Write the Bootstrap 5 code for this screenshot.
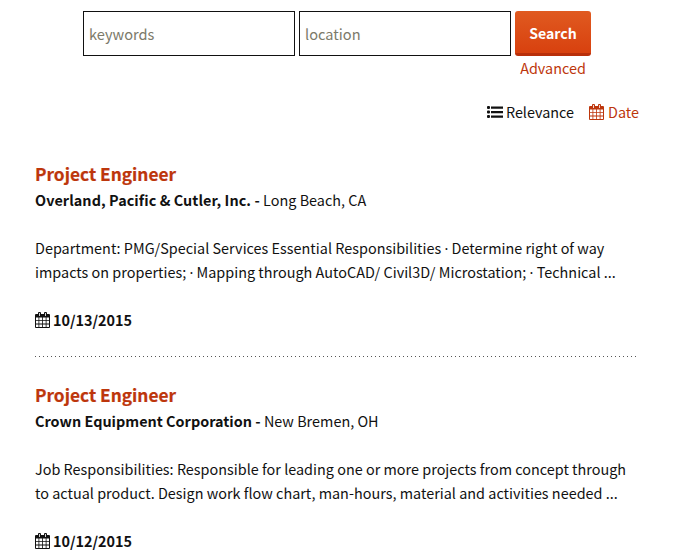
<!DOCTYPE html>
<html lang="en">
<head>
<meta charset="utf-8">
<meta name="viewport" content="width=device-width, initial-scale=1">
<title>Job search</title>
<link href="https://cdn.jsdelivr.net/npm/bootstrap@5.3.0/dist/css/bootstrap.min.css" rel="stylesheet">
<style>
body{font-family:"Noto Sans CJK SC","Noto Sans",sans-serif;font-size:14.4px;line-height:24px;color:#111;background:#fff;height:557px;overflow:hidden}
a{color:#bd360c;text-decoration:none}
.search-bar{padding:11px 0 0 83px;gap:4px}
.search-bar .form-control{width:212px;height:45px;border:1px solid #111;border-radius:0;padding:0 5px;font-size:14.6px;color:#111;box-shadow:none}
.search-bar .form-control::placeholder{color:#7c7a6a;opacity:1}
.btn-search{width:76px;height:45px;padding:3px 0 0;border:0;border-bottom:3px solid #b92f0a;border-radius:3px;background:linear-gradient(#e05a20,#d8410f);color:#fff;font-size:14.1px;font-weight:700}
.search-col{width:76px}
.advanced{line-height:24px}
.sort-bar{padding:20px 37px 0 0;gap:15px}
.sort-bar .d-flex,.posted{gap:3px}
.sort-bar .by-date{gap:4px}
.results{height:433px;overflow:hidden;padding:37px 40px 0 35px}
.job{height:196px;margin-bottom:25px;background:repeating-linear-gradient(90deg,#555 0 1px,transparent 1px 4px) left bottom/100% 1px no-repeat}
.job h2{font-size:17.3px;line-height:26px;font-weight:700;margin:0 0 1px;-webkit-text-stroke:.2px #bd360c}
.job p{margin:0 0 24px;white-space:nowrap;letter-spacing:.015px}
.job .company-wide{letter-spacing:.07px}
.dot{font-family:"Noto Sans",sans-serif;line-height:1}
.ico{width:15px;height:16px;flex:none}
.ico-list{width:16px;height:12px;flex:none}
</style>
<script src="https://cdn.jsdelivr.net/npm/bootstrap@5.3.0/dist/js/bootstrap.bundle.min.js"></script>
</head>
<body>
<svg class="d-none"><symbol id="cal" viewBox="0 0 15 16"><path fill="currentColor" fill-rule="evenodd" d="M1 2h2V1q0-1 1-1h1q1 0 1 1v1h3V1q0-1 1-1h1q1 0 1 1v1h2q1 0 1 1v12q0 1-1 1H1q-1 0-1-1V3q0-1 1-1zM1 5.5V8h2.5V5.5zm3.3 0V8h2.8V5.5zm3.6 0V8h2.8V5.5zm3.6 0V8H14V5.5zM1 8.8v2.8h2.5V8.8zm3.3 0v2.8h2.8V8.8zm3.6 0v2.8h2.8V8.8zm3.6 0v2.8H14V8.8zM1 12.4V15h2.5v-2.6zm3.3 0V15h2.8v-2.6zm3.6 0V15h2.8v-2.6zm3.6 0V15H14v-2.6zM4.1 1v3h.8V1zm6 0v3h.8V1z"/></symbol></svg>
<form class="search-bar d-flex align-items-start">
<input class="form-control" placeholder="keywords" aria-label="keywords">
<input class="form-control" placeholder="location" aria-label="location">
<div class="search-col text-center d-flex flex-column"><button type="button" class="btn btn-search">Search</button><a href="#" class="advanced">Advanced</a></div>
</form>
<div class="sort-bar d-flex justify-content-end">
<span class="d-flex align-items-center"><svg class="ico-list" viewBox="0 0 16 12" fill="currentColor"><path d="M1 0h1q1 0 1 1v1q0 1-1 1H1Q0 3 0 2V1q0-1 1-1zM1 4.5h1q1 0 1 1v1q0 1-1 1H1q-1 0-1-1v-1q0-1 1-1zM1 9h1q1 0 1 1v1q0 1-1 1H1q-1 0-1-1v-1q0-1 1-1zM4 .5h12v2.2H4zM4 5h12v2.2H4zM4 9.5h12v2.2H4z"/></svg><span>Relevance</span></span>
<a href="#" class="by-date d-flex align-items-center"><svg class="ico"><use href="#cal"/></svg><span>Date</span></a>
</div>
<main class="results">
<article class="job"><h2><a href="#">Project Engineer</a></h2>
<p><strong class="company-wide">Overland, Pacific &amp; Cutler, Inc. -</strong> Long Beach, CA</p>
<p>Department: PMG/Special Services Essential Responsibilities <span class="dot">·</span> Determine right of way<br>impacts on properties; <span class="dot">·</span> Mapping through AutoCAD/ Civil3D/ Microstation; <span class="dot">·</span> Technical ...</p>
<div class="posted d-flex align-items-center fw-bold"><svg class="ico"><use href="#cal"/></svg><span>10/13/2015</span></div></article>
<article class="job"><h2><a href="#">Project Engineer</a></h2>
<p><strong>Crown Equipment Corporation -</strong> New Bremen, OH</p>
<p>Job Responsibilities: Responsible for leading one or more projects from concept through<br>to actual product. Design work flow chart, man-hours, material and activities needed ...</p>
<div class="posted d-flex align-items-center fw-bold"><svg class="ico"><use href="#cal"/></svg><span>10/12/2015</span></div></article>
</main>
</body>
</html>
